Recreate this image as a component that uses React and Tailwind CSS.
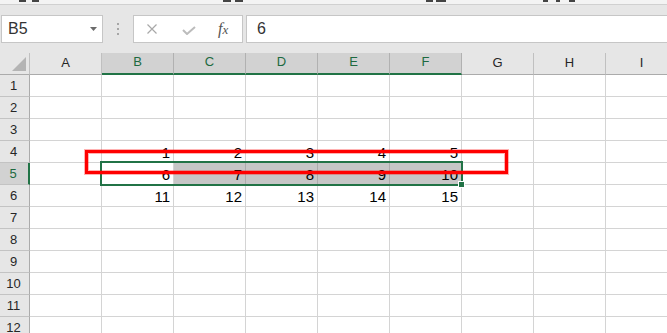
import React from "react";

const cols = ["A", "B", "C", "D", "E", "F", "G", "H", "I"];
const selCols = ["B", "C", "D", "E", "F"];
const rows = [1, 2, 3, 4, 5, 6, 7, 8, 9, 10, 11, 12];

const data = {
  4: { B: 1, C: 2, D: 3, E: 4, F: 5 },
  5: { B: 6, C: 7, D: 8, E: 9, F: 10 },
  6: { B: 11, C: 12, D: 13, E: 14, F: 15 },
};

const ColHeader = ({ col }) => {
  const selected = selCols.includes(col);
  return (
    <div
      className={
        selected
          ? "flex items-center justify-center pb-[2px] bg-[#d2d2d2] text-[#1d6a40] border-r border-r-[#b1b1b1] border-b-2 border-b-[#217346] text-[13px]"
          : "flex items-center justify-center pb-[2px] bg-[#e6e6e6] text-[#262626] border-r border-r-[#c0c0c0] border-b border-b-[#ababab] text-[13px]"
      }
    >
      {col}
    </div>
  );
};

const RowHeader = ({ row }) => {
  const selected = row === 5;
  return (
    <div
      className={
        selected
          ? "flex items-center justify-center pr-[2px] bg-[#d2d2d2] text-[#1d6a40] border-r-2 border-r-[#217346] border-b border-b-[#c3c3c3] text-[13px]"
          : "flex items-center justify-center pr-[2px] bg-[#e6e6e6] text-[#262626] border-r border-r-[#ababab] border-b border-b-[#c3c3c3] text-[13px]"
      }
    >
      {row}
    </div>
  );
};

const Cell = ({ row, col }) => {
  const value = data[row] ? data[row][col] : undefined;
  const shaded = row === 5 && ["C", "D", "E", "F"].includes(col);
  return (
    <div
      className={
        shaded
          ? "flex items-end justify-end pr-[3px] pb-[2px] bg-[#c6c6c6] border-r border-r-[#ababab] border-b border-b-[#d4d4d4] text-[15px] leading-none text-black"
          : "flex items-end justify-end pr-[3px] pb-[2px] bg-white border-r border-r-[#d4d4d4] border-b border-b-[#d4d4d4] text-[15px] leading-none text-black"
      }
    >
      {value}
    </div>
  );
};

export default function App() {
  return (
    <div className="w-[667px] h-[333px] overflow-hidden bg-white font-['Liberation_Sans',Arial,sans-serif]">
      {/* ribbon remnant */}
      <div className="h-[4px] bg-[#f3f3f3] flex items-start">
        <span className="ml-[19px] w-[7px] h-[2px] bg-[#444]" />
        <span className="ml-[6px] w-[7px] h-[2px] bg-[#444]" />
        <span className="ml-[184px] w-[8px] h-[2px] bg-[#444]" />
        <span className="ml-[4px] w-[8px] h-[2px] bg-[#444]" />
        <span className="ml-[183px] w-[7px] h-[2px] bg-[#444]" />
        <span className="ml-[3px] w-[10px] h-[2px] bg-[#444]" />
        <span className="ml-[97px] w-[5px] h-[2px] bg-[#444]" />
        <span className="ml-[8px] w-[4px] h-[2px] bg-[#444]" />
        <span className="ml-[9px] w-[6px] h-[2px] bg-[#444]" />
      </div>
      <div className="h-px bg-[#d0d0d0]" />

      {/* formula bar */}
      <div className="h-[48px] bg-[#e6e6e6] pt-[10px] flex items-start">
        <div className="ml-[1px] w-[102px] h-[28px] bg-white border border-[#c6c6c6] flex items-center">
          <span className="pl-[6px] text-[16px] text-[#333]">B5</span>
          <svg className="ml-auto mr-[5px]" width="7" height="4" viewBox="0 0 7 4">
            <polygon points="0,0 7,0 3.5,4" fill="#6b6b6b" />
          </svg>
        </div>
        <div className="w-[30px] h-[28px] flex flex-col items-center justify-center gap-[3px]">
          <span className="w-[2px] h-[2px] bg-[#a6a6a6]" />
          <span className="w-[2px] h-[2px] bg-[#a6a6a6]" />
          <span className="w-[2px] h-[2px] bg-[#a6a6a6]" />
        </div>
        <div className="w-[110px] h-[28px] bg-white border border-[#c6c6c6] flex items-center pl-[13px]">
          <svg width="10" height="10" viewBox="0 0 10 10">
            <path d="M0.5 0.5 L9.5 9.5 M9.5 0.5 L0.5 9.5" stroke="#a8a8a8" strokeWidth="1.2" fill="none" />
          </svg>
          <svg className="ml-[25px] mt-[2px]" width="14" height="9" viewBox="0 0 14 9">
            <path d="M1 4 L5 8 L13 1" stroke="#bcbcbc" strokeWidth="2" fill="none" />
          </svg>
          <span className="ml-[22px] font-['Liberation_Serif',serif] italic text-[#555] text-[16px] leading-none">
            f<span className="text-[13px]">x</span>
          </span>
        </div>
        <div className="ml-[3px] flex-1 h-[28px] bg-white border border-[#c6c6c6] border-r-0 flex items-center">
          <span className="pl-[10px] text-[16px] text-[#333]">6</span>
        </div>
      </div>

      {/* grid */}
      <div className="relative">
        <div className="grid grid-cols-[30px_repeat(9,72px)] auto-rows-[22px]">
          <div className="bg-[#e6e6e6] border-r border-r-[#c0c0c0] border-b border-b-[#ababab] flex items-end justify-end pr-[3px] pb-[3px]">
            <svg width="14" height="14" viewBox="0 0 14 14">
              <polygon points="14,0 14,14 0,14" fill="#b4b4b4" />
            </svg>
          </div>
          {cols.map((c) => (
            <ColHeader key={c} col={c} />
          ))}
          {rows.map((r) => (
            <React.Fragment key={r}>
              <RowHeader row={r} />
              {cols.map((c) => (
                <Cell key={c} row={r} col={c} />
              ))}
            </React.Fragment>
          ))}
        </div>

        {/* active selection */}
        <div className="absolute left-[100px] top-[108px] w-[363px] h-[25px] border-2 border-[#217346]" />
        <div className="absolute left-[458px] top-[128px] w-[7px] h-[7px] bg-[#217346] border border-white" />

        {/* red annotation box */}
        <div className="absolute left-[85px] top-[97px] w-[423px] h-[24px] border-[3px] border-[#ff0000] shadow-[0_0_0_1px_rgba(255,0,0,0.3),inset_0_0_0_1px_rgba(255,0,0,0.3)]" />
      </div>
    </div>
  );
}
